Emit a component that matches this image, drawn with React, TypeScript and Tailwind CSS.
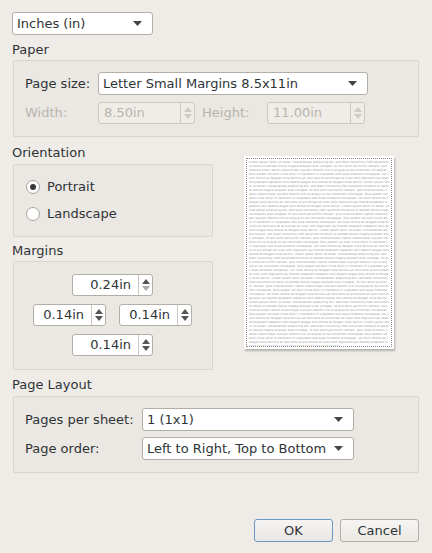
import React from "react";

const F = { fontFamily: '"DejaVu Sans", sans-serif' };

function Caret() {
  return (
    <svg width="9" height="5" viewBox="0 0 9 5" className="shrink-0">
      <path d="M0 0h9L4.5 5z" fill="#444" />
    </svg>
  );
}

function Combo({ w, text }: { w: string; text: string }) {
  return (
    <div className={`${w} h-[23px] bg-white border border-[#b3aea8] rounded-[3px] flex items-center pl-[4px] pr-[10px] justify-between text-[13px] text-[#2e3436]`}>
      <span>{text}</span>
      <Caret />
    </div>
  );
}

function Arrows({ disabled, downLight }: { disabled?: boolean; downLight?: boolean }) {
  const c = disabled ? "#cfcac4" : "#555";
  const d = disabled ? "#cfcac4" : downLight ? "#aaa" : "#555";
  return (
    <div className="w-[14px] h-full border-l border-[#cdc8c2] flex flex-col items-center justify-center gap-[2px]">
      <svg width="8" height="5" viewBox="0 0 8 5"><path d="M0 5h8L4 0z" fill={c} /></svg>
      <svg width="8" height="5" viewBox="0 0 8 5"><path d="M0 0h8L4 5z" fill={d} /></svg>
    </div>
  );
}

function Spin({ w, text, disabled, downLight, left }: { w: string; text: string; disabled?: boolean; downLight?: boolean; left?: boolean }) {
  return (
    <div className={`${w} h-[22px] ${disabled ? "bg-[#f0ede9]" : "bg-white"} border ${disabled ? "border-[#cdc8c2]" : "border-[#b3aea8]"} rounded-[3px] flex items-center text-[13px] ${disabled ? "text-[#b9b4ae]" : "text-[#2e3436]"}`}>
      <span className={`flex-1 ${left ? "text-left pl-[5px]" : "text-right pr-[7px]"}`}>{text}</span>
      <Arrows disabled={disabled} downLight={downLight} />
    </div>
  );
}

function Radio({ on, label }: { on?: boolean; label: string }) {
  return (
    <div className="flex items-center gap-[7px] h-[20px]">
      <div className="w-[14px] h-[14px] rounded-full bg-white border border-[#a9a39d] flex items-center justify-center">
        {on && <div className="w-[6px] h-[6px] rounded-full bg-[#3a3a3a]" />}
      </div>
      <span className="text-[13px] text-[#2e3436]">{label}</span>
    </div>
  );
}

const Label = ({ t }: { t: string }) => (
  <div className="text-[13px] text-[#2e3436] leading-[16px] h-[16px]">{t}</div>
);

const lorem =
  "Lorem ipsum dolor sit amet, consectetuer adipiscing elit, sed diam nonummy nibh euismod tincidunt ut laoreet dolore magna aliquam erat volutpat. Ut wisi enim ad minim veniam, quis nostrud exerci tation ullamcorper suscipit lobortis nisl ut aliquip ex ea commodo consequat. Duis autem vel eum iriure dolor in hendrerit in vulputate velit esse molestie consequat, vel illum dolore eu feugiat nulla facilisis at vero eros et accumsan et iusto odio dignissim qui blandit praesent luptatum zzril delenit augue duis dolore te feugait nulla facilisi. ";

export default function App() {
  return (
    <div style={F} className="w-[432px] h-[553px] bg-[#efebe7] relative overflow-hidden">
      <div className="pl-[12px] pt-[12px]">
        <Combo w="w-[141px]" text="Inches (in)" />
      </div>
      <div className="pl-[12px] mt-[7px]"><Label t="Paper" /></div>
      <div className="mx-[13px] mt-[2px] h-[77px] border border-[#d8d4cf] rounded-[2px] bg-[#ebe7e3] pl-[11px] pt-[11px]">
        <div className="flex items-center">
          <span className="w-[73px] text-[13px] text-[#2e3436]">Page size:</span>
          <Combo w="w-[270px]" text="Letter Small Margins 8.5x11in" />
        </div>
        <div className="flex items-center mt-[7px]">
          <span className="w-[73px] text-[13px] text-[#b9b4ae]">Width:</span>
          <Spin w="w-[97px]" text="8.50in" disabled left />
          <span className="w-[72px] pl-[7px] text-[13px] text-[#b9b4ae]">Height:</span>
          <Spin w="w-[98px]" text="11.00in" disabled left />
        </div>
      </div>
      <div className="flex mt-[8px]">
        <div className="w-[232px]">
          <div className="pl-[12px]"><Label t="Orientation" /></div>
          <div className="ml-[13px] mt-[3px] w-[200px] h-[73px] border border-[#d8d4cf] rounded-[2px] bg-[#ebe7e3] pl-[12px] pt-[12px] flex flex-col gap-[7px]">
            <Radio on label="Portrait" />
            <Radio label="Landscape" />
          </div>
          <div className="pl-[12px] mt-[6px]"><Label t="Margins" /></div>
          <div className="ml-[13px] mt-[2px] w-[200px] h-[109px] border border-[#d8d4cf] rounded-[2px] bg-[#ebe7e3] pt-[12px] flex flex-col gap-[8px]">
            <div className="pl-[58px]"><Spin w="w-[81px]" text="0.24in" downLight /></div>
            <div className="flex gap-[13px] pl-[19px]">
              <Spin w="w-[73px]" text="0.14in" />
              <Spin w="w-[73px]" text="0.14in" />
            </div>
            <div className="pl-[58px]"><Spin w="w-[81px]" text="0.14in" /></div>
          </div>
        </div>
        <div className="pl-[12px] pt-[11px]">
          <div className="w-[150px] h-[193px] bg-white shadow-[1px_2px_2px_rgba(0,0,0,0.25)] p-[2px]">
            <div className="w-full h-full border border-dotted border-[#888] overflow-hidden px-[2px] pt-[1px] text-[3px] leading-[4px] text-[#9a9a9a] break-all">
              {lorem.repeat(8)}
            </div>
          </div>
        </div>
      </div>
      <div className="pl-[12px] mt-[7px]"><Label t="Page Layout" /></div>
      <div className="mx-[13px] mt-[3px] h-[77px] border border-[#d8d4cf] rounded-[2px] bg-[#ebe7e3] pl-[11px] pt-[11px] flex flex-col gap-[6px]">
        <div className="flex items-center">
          <span className="w-[117px] text-[13px] text-[#2e3436]">Pages per sheet:</span>
          <Combo w="w-[212px]" text="1 (1x1)" />
        </div>
        <div className="flex items-center">
          <span className="w-[117px] text-[13px] text-[#2e3436]">Page order:</span>
          <Combo w="w-[212px]" text="Left to Right, Top to Bottom" />
        </div>
      </div>
      <div className="flex justify-end gap-[7px] pr-[13px] mt-[46px]">
        <div className="w-[79px] h-[23px] border border-[#6a98c4] rounded-[3px] bg-gradient-to-b from-[#f6f5f4] to-[#e9e6e2] flex items-center justify-center text-[13px] text-[#2e3436]">OK</div>
        <div className="w-[79px] h-[23px] border border-[#b3aea8] rounded-[3px] bg-gradient-to-b from-[#f6f5f4] to-[#ebe8e4] flex items-center justify-center text-[13px] text-[#2e3436]">Cancel</div>
      </div>
    </div>
  );
}
